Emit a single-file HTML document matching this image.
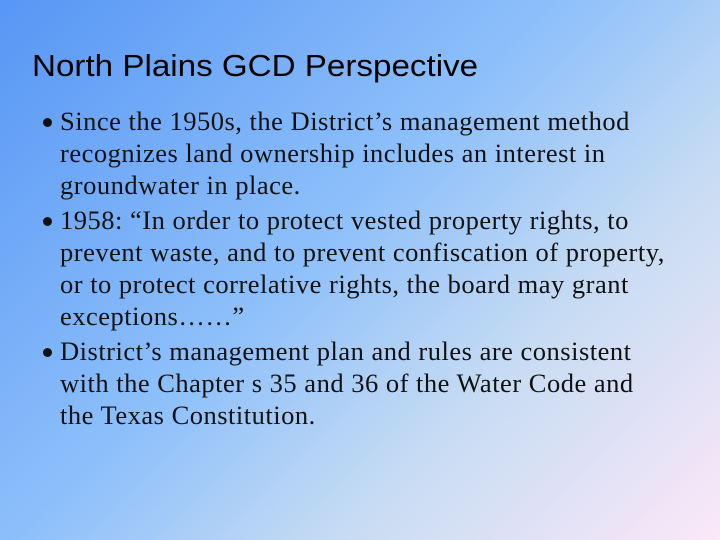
<!DOCTYPE html>
<html><head><style>
html,body{margin:0;padding:0}
body{width:720px;height:540px;overflow:hidden;position:relative;
background:linear-gradient(135deg,#5796f5 0%,#8ec0fa 45%,#c7dcf3 70%,#fbe8f8 100%);}
h1{position:absolute;left:32px;top:48px;margin:0;font:31px "Liberation Sans",sans-serif;color:#000;transform:scaleX(1.07);transform-origin:left;white-space:nowrap}
ul{position:absolute;left:40px;top:105px;margin:0;padding:0;list-style:none;width:680px}
li{position:relative;padding-left:20px;font:26.5px/32px "Liberation Serif",serif;color:#111;margin-bottom:3px;white-space:nowrap;letter-spacing:0.5px}
li:before{content:"";position:absolute;left:3px;top:13px;width:9px;height:9px;border-radius:50%;background:#111}
</style></head><body>
<h1>North Plains GCD Perspective</h1>
<ul>
<li>Since the 1950s, the District’s management method<br>recognizes land ownership includes an interest in<br>groundwater in place.</li>
<li>1958: “In order to protect vested property rights, to<br>prevent waste, and to prevent confiscation of property,<br>or to protect correlative rights, the board may grant<br>exceptions……”</li>
<li>District’s management plan and rules are consistent<br>with the Chapter s 35 and 36 of the Water Code and<br>the Texas Constitution.</li>
</ul>
</body></html>
